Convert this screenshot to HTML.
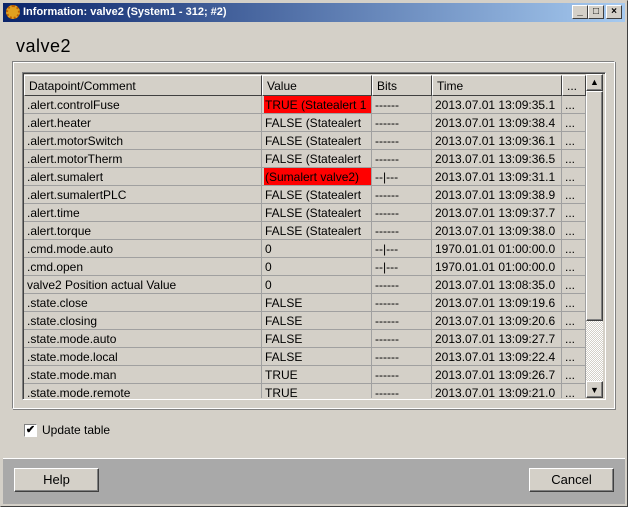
<!DOCTYPE html>
<html><head><style>
*{margin:0;padding:0;box-sizing:border-box}
body{width:628px;height:507px;background:#d4d0c8;font-family:"Liberation Sans",sans-serif;font-size:12px;position:relative;overflow:hidden}
.a{position:absolute}
.win{left:0;top:0;width:628px;height:507px;border:1px solid;border-color:#d4d0c8 #404040 #404040 #d4d0c8}
.tb{left:3px;top:3px;width:622px;height:19px;background:linear-gradient(90deg,#0a246a,#a6caf0);color:#fff;font-weight:bold;font-size:11px;line-height:19px;padding-left:20px}
.cb{top:5px;width:16px;height:14px;background:#d4d0c8;border:1px solid;border-color:#fff #404040 #404040 #fff;font-size:10px;line-height:11px;text-align:center;color:#000;font-weight:bold}
.btn{background:#d4d0c8;border:1px solid;border-color:#fff #404040 #404040 #fff;box-shadow:inset -1px -1px #808080;text-align:center;line-height:22px;font-size:13px}
.cell{position:absolute;height:18px;line-height:18px;border-right:1px solid #a0a0a0;border-bottom:1px solid #a0a0a0;padding-left:3px;white-space:nowrap;overflow:hidden;font-size:12px}
.hd{position:absolute;top:75px;height:21px;line-height:21px;border:1px solid;border-color:#fff #404040 #404040 #fff;padding-left:4px;font-size:12px;white-space:nowrap;overflow:hidden}
.red{background:#f00}
</style></head><body>
<div class="a win"></div>
<div class="a tb">Information: valve2 (System1 - 312; #2)</div>
<div class="a" style="left:6px;top:5px;width:14px;height:14px;border-radius:50%;background:#e0a020;border:2px dotted #c06000"></div>
<div class="a cb" style="left:572px">_</div>
<div class="a cb" style="left:588px">□</div>
<div class="a cb" style="left:606px">×</div>
<div class="a" style="left:16px;top:36px;font-size:18px;letter-spacing:0.5px">valve2</div>
<div class="a" style="left:12px;top:61px;width:603px;height:348px;border:1px solid;border-color:#808080 #fff #fff #808080;box-shadow:inset 1px 1px #fff,1px 1px #808080"></div>
<div class="a" style="left:22px;top:72px;width:584px;height:328px;border:1px solid;border-color:#808080 #fff #fff #808080;box-shadow:inset 1px 1px #404040"></div>
<div class="a" style="left:24px;top:74px;width:562px;height:324px;overflow:hidden">
<div class="hd" style="left:0;top:1px;width:238px">Datapoint/Comment</div>
<div class="hd" style="left:238px;top:1px;width:110px">Value</div>
<div class="hd" style="left:348px;top:1px;width:60px">Bits</div>
<div class="hd" style="left:408px;top:1px;width:130px">Time</div>
<div class="hd" style="left:538px;top:1px;width:24px">...</div>
<div id="rows"></div>
</div>
<div class="a" style="left:586px;top:74px;width:17px;height:324px;background:repeating-conic-gradient(#d4d0c8 0 25%,#fff 0 50%) 0 0/2px 2px"></div>
<div class="a btn" style="left:586px;top:74px;width:17px;height:17px;line-height:14px;font-size:9px">▲</div>
<div class="a btn" style="left:586px;top:91px;width:17px;height:230px"></div>
<div class="a btn" style="left:586px;top:381px;width:17px;height:17px;line-height:16px;font-size:9px">▼</div>
<div class="a" style="left:24px;top:424px;width:13px;height:13px;background:#fff;border:1px solid;border-color:#808080 #fff #fff #808080;font-size:11px;line-height:10px;text-align:center;font-weight:bold">✔</div>
<div class="a" style="left:42px;top:423px;font-size:12px">Update table</div>
<div class="a" style="left:3px;top:458px;width:622px;height:46px;background:#a9a9a9;border-top:1px solid #fff"></div>
<div class="a btn" style="left:14px;top:468px;width:85px;height:24px">Help</div>
<div class="a btn" style="left:529px;top:468px;width:85px;height:24px">Cancel</div>
<script>
var d=[[".alert.controlFuse","TRUE (Statealert 1",1,"------","2013.07.01 13:09:35.1"],
[".alert.heater","FALSE (Statealert",0,"------","2013.07.01 13:09:38.4"],
[".alert.motorSwitch","FALSE (Statealert",0,"------","2013.07.01 13:09:36.1"],
[".alert.motorTherm","FALSE (Statealert",0,"------","2013.07.01 13:09:36.5"],
[".alert.sumalert"," (Sumalert valve2)",1,"--!---","2013.07.01 13:09:31.1"],
[".alert.sumalertPLC","FALSE (Statealert",0,"------","2013.07.01 13:09:38.9"],
[".alert.time","FALSE (Statealert",0,"------","2013.07.01 13:09:37.7"],
[".alert.torque","FALSE (Statealert",0,"------","2013.07.01 13:09:38.0"],
[".cmd.mode.auto","0",0,"--!---","1970.01.01 01:00:00.0"],
[".cmd.open","0",0,"--!---","1970.01.01 01:00:00.0"],
["valve2 Position actual Value","0",0,"------","2013.07.01 13:08:35.0"],
[".state.close","FALSE",0,"------","2013.07.01 13:09:19.6"],
[".state.closing","FALSE",0,"------","2013.07.01 13:09:20.6"],
[".state.mode.auto","FALSE",0,"------","2013.07.01 13:09:27.7"],
[".state.mode.local","FALSE",0,"------","2013.07.01 13:09:22.4"],
[".state.mode.man","TRUE",0,"------","2013.07.01 13:09:26.7"],
[".state.mode.remote","TRUE",0,"------","2013.07.01 13:09:21.0"]];
var h="";d.forEach(function(r,i){var y=22+i*18;
h+='<div class="cell" style="left:0;top:'+y+'px;width:238px">'+r[0]+'</div>';
h+='<div class="cell" style="left:238px;top:'+y+'px;width:110px;padding-left:2px"><div class="'+(r[2]?'red':'')+'" style="height:17px;padding-left:1px">'+r[1]+'</div></div>';
h+='<div class="cell" style="left:348px;top:'+y+'px;width:60px">'+r[3].replace("!","|")+'</div>';
h+='<div class="cell" style="left:408px;top:'+y+'px;width:130px">'+r[4]+'</div>';
h+='<div class="cell" style="left:538px;top:'+y+'px;width:24px">...</div>';});
document.getElementById("rows").innerHTML=h;
</script>
</body></html>
